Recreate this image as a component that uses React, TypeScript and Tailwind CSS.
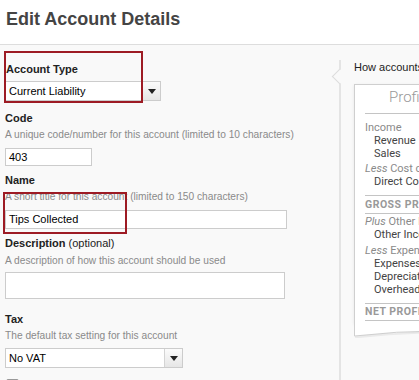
const sans = { fontFamily: '"Liberation Sans", Arial, sans-serif' };

function Caret() {
  return (
    <svg width="8" height="5" viewBox="0 0 8 5" className="block">
      <path d="M0 0h8L4 5z" fill="#222" />
    </svg>
  );
}

function Select({ value, width }: { value: string; width: string }) {
  return (
    <div className={`flex h-[20px] border border-[#cccccc] bg-white ${width}`}>
      <div className="flex-1 pl-[3px] text-[11px] leading-[18px] text-black">{value}</div>
      <div className="flex w-[18px] items-center justify-center border-l border-[#d4d4d4] bg-gradient-to-b from-[#fbfbfb] to-[#e6e6e6]">
        <Caret />
      </div>
    </div>
  );
}

function Label({ children, className = '' }: { children: React.ReactNode; className?: string }) {
  return <div className={`h-[14px] text-[11px] font-bold leading-[14px] text-[#222] ${className}`}>{children}</div>;
}

function Help({ children, className = '' }: { children: React.ReactNode; className?: string }) {
  return <div className={`h-[14px] whitespace-nowrap text-[10.2px] leading-[14px] text-[#8a8a8a] ${className}`}>{children}</div>;
}

function Row({ children, indent = false, className = '' }: { children: React.ReactNode; indent?: boolean; className?: string }) {
  return (
    <div className={`h-[13px] whitespace-nowrap text-[11px] leading-[13px] ${indent ? 'pl-[9px] text-[#444]' : 'text-[#8a8a8a]'} ${className}`}>
      {children}
    </div>
  );
}

function Rule() {
  return <div className="h-px bg-[#c4c4c4]" />;
}

export default function App() {
  return (
    <div className="relative h-[380px] w-[419px] overflow-hidden bg-[#f9f9f9]" style={sans}>
      <div className="h-[45px] border-b border-[#dddddd] bg-white pl-[6px] pt-[8px]">
        <h1 className="text-[18px] font-bold leading-[22px] text-[#444]">Edit Account Details</h1>
      </div>

      <div className="flex">
        <div className="relative w-[339px] shrink-0 pl-[5px] pt-[17px]">
          <Label className="pl-px">Account Type</Label>
          <div className="mt-[5px]">
            <Select value="Current Liability" width="w-[156px]" />
          </div>

          <Label className="mt-[10px]">Code</Label>
          <Help className="mt-[3px]">A unique code/number for this account (limited to 10 characters)</Help>
          <div className="mt-[6px] h-[18px] w-[87px] border border-[#cccccc] bg-white pl-[3px] text-[11px] leading-[16px] text-black">403</div>

          <Label className="mt-[7px]">Name</Label>
          <Help className="mt-[3px]">A short title for this account (limited to 150 characters)</Help>
          <div className="mt-[6px] h-[19px] w-[282px] border border-[#cccccc] bg-white pl-[3px] text-[11px] leading-[17px] text-black">Tips Collected</div>

          <Label className="mt-[7px]">
            Description <span className="font-normal">(optional)</span>
          </Label>
          <Help className="mt-[4px]">A description of how this account should be used</Help>
          <div className="mt-[4px] h-[27px] w-[280px] border border-[#cccccc] bg-white" />

          <Label className="mt-[13px]">Tax</Label>
          <Help className="mt-[3px]">The default tax setting for this account</Help>
          <div className="mt-[5px]">
            <Select value="No VAT" width="w-[178px]" />
          </div>

          <div className="mt-[9px] flex items-center gap-[8px] pl-px">
            <div className="h-[13px] w-[13px] rounded-[2px] border border-[#999] bg-white" />
            <span className="text-[11px] text-[#222]">Enable payments to this account</span>
          </div>

          <div className="absolute left-[4px] top-[6px] h-[52px] w-[139px] border-2 border-[#9d1b24]" />
          <div className="absolute left-[3px] top-[147px] h-[42px] w-[124px] border-2 border-[#9d1b24]" />
        </div>

        <div className="relative mt-[15px] min-h-[400px] flex-1 border-l-2 border-[#e4e4e4] pl-[13px]">
          <div className="absolute left-[-7px] top-[11px] h-[11px] w-[11px] rotate-45 border-b border-l border-[#dcdcdc] bg-[#f9f9f9]" />
          <div className="h-[14px] whitespace-nowrap text-[11px] leading-[14px] text-[#222]">How accounts are reported</div>

          <div className="mt-[10px] w-[170px]" style={{ fontFamily: 'Roboto, sans-serif' }}>
            <div className="border-x border-t border-[#cfcfcf] bg-white px-[10px] shadow-[0_1px_3px_rgba(0,0,0,0.08)]">
              <div className="pl-[24px] pt-[2px] text-[15px] font-light leading-[20px] text-[#999]">Profit and Loss</div>
              <div className="mt-[6px]"><Rule /></div>
              <div className="pt-[7px]">
                <Row>Income</Row>
                <Row indent>Revenue</Row>
                <Row indent>Sales</Row>
                <Row className="mt-[2px]"><i>Less</i> Cost of Sales</Row>
                <Row indent>Direct Costs</Row>
              </div>
              <div className="mt-[7px]"><Rule /></div>
              <div className="h-[17px] text-[10.5px] font-bold leading-[17px] tracking-[0.5px] text-[#999]">GROSS PROFIT</div>
              <Rule />
              <div className="pt-[1px]">
                <Row><i>Plus</i> Other Income</Row>
                <Row indent>Other Income</Row>
                <Row className="mt-[3px]"><i>Less</i> Expenses</Row>
                <Row indent>Expenses</Row>
                <Row indent>Depreciation</Row>
                <Row indent>Overheads</Row>
              </div>
              <div className="mt-[7px]"><Rule /></div>
              <div className="h-[16px] text-[10.5px] font-bold leading-[16px] tracking-[0.5px] text-[#999]">NET PROFIT</div>
              <Rule />
              <div className="h-[3px]" />
            </div>
            <svg width="170" height="14" viewBox="0 0 170 14" className="block">
              <path d="M0 0V12Q85 2 170 12V0Z" fill="#fff" />
              <path d="M0.5 0V12Q85 2 169.5 12V0" fill="none" stroke="#cfcfcf" />
              <path d="M1 13.5Q85 3.5 169 13.5" fill="none" stroke="rgba(0,0,0,0.06)" strokeWidth="2" />
            </svg>
          </div>
        </div>
      </div>
    </div>
  );
}
